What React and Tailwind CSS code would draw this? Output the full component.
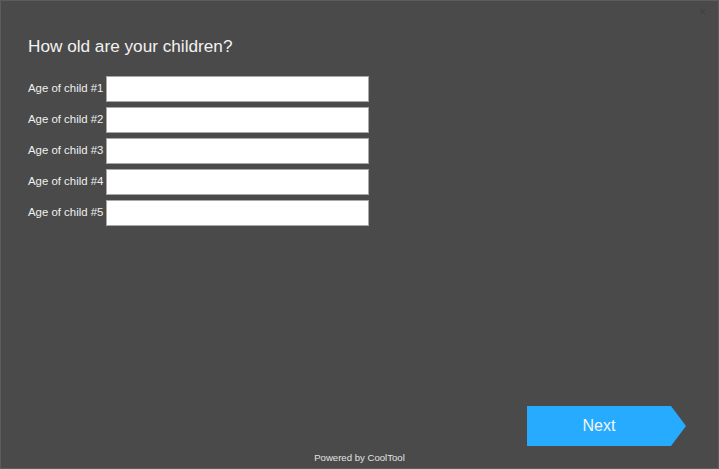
export default function App() {
  const rows = [1, 2, 3, 4, 5]

  return (
    <div
      className="relative flex flex-col w-[719px] h-[469px] bg-[#4a4a4a] border border-[#5c5c5c] overflow-hidden"
      style={{ fontFamily: '"Liberation Sans", Arial, sans-serif' }}
    >
      <span className="absolute right-[12px] top-[4px] text-[12px] leading-[14px] text-[#404040]">×</span>

      <div className="pl-[27px] pt-[35px]">
        <h1 className="text-[17.2px] leading-[20px] text-[#f2f2f2] font-normal">How old are your children?</h1>

        <div className="mt-[20px] flex flex-col gap-[5px]">
          {rows.map((n) => (
            <div key={n} className="flex items-center h-[26px]">
              <label className="w-[78px] text-[11.4px] text-[#f0f0f0] whitespace-nowrap">Age of child #{n}</label>
              <input
                type="text"
                className="w-[263px] h-[26px] bg-white border border-[#a8a8a8] outline-none"
              />
            </div>
          ))}
        </div>
      </div>

      <div className="flex-1" />

      <div className="flex justify-end pr-[32px]">
        <button
          className="w-[159px] h-[40px] bg-[#26abff] text-[16px] text-[#f4f4f4] [clip-path:polygon(0_0,144px_0,159px_50%,144px_100%,0_100%)]"
        >
          <span className="block w-[144px] text-center">Next</span>
        </button>
      </div>

      <div className="mt-[6px] pb-[5px] text-center text-[9.6px] leading-[11px] text-[#e2e2e2]">Powered by CoolTool</div>
    </div>
  )
}
